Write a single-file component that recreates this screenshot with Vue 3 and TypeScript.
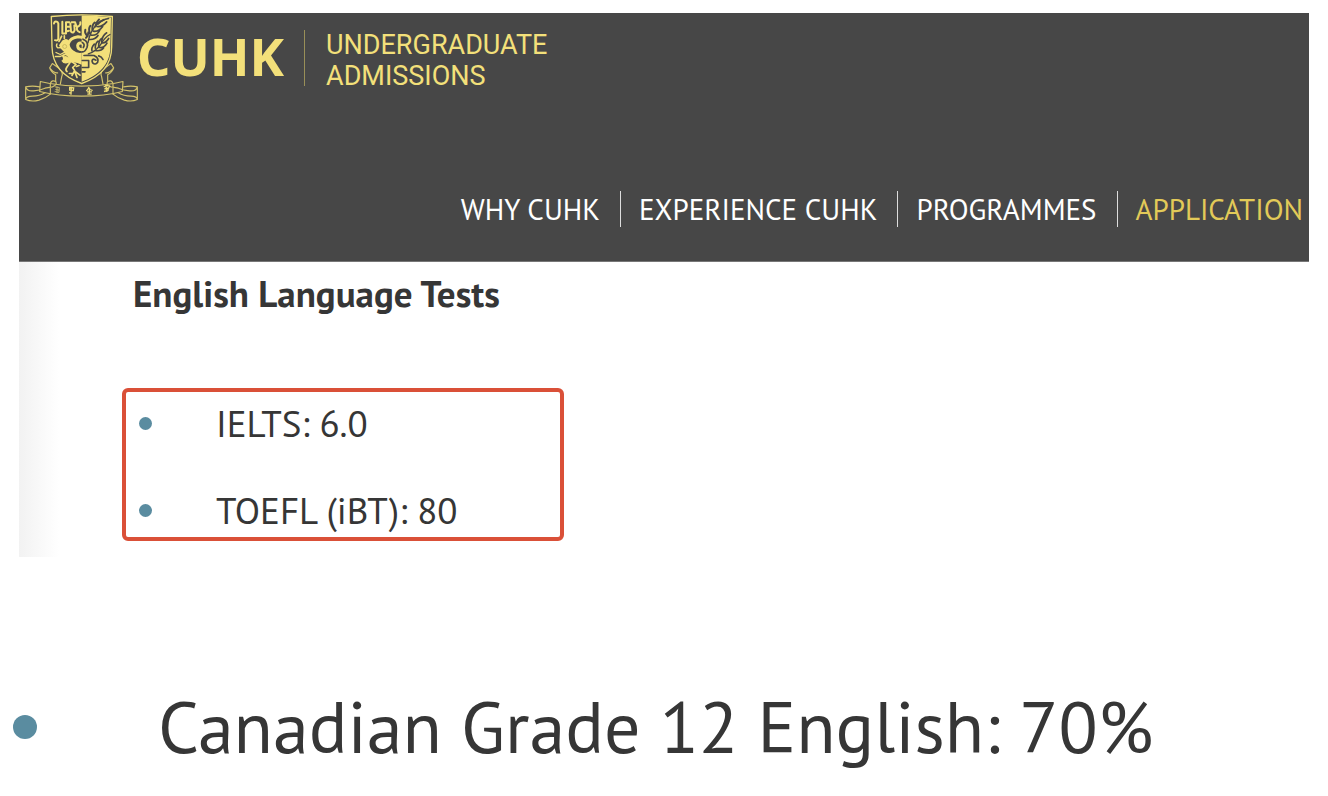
<script setup lang="ts">
interface NavItem {
  label: string
  current?: boolean
}

const navItems: NavItem[] = [
  { label: 'WHY CUHK' },
  { label: 'EXPERIENCE CUHK' },
  { label: 'PROGRAMMES' },
  { label: 'APPLICATION', current: true },
]

const tests: string[] = ['IELTS: 6.0', 'TOEFL (iBT): 80']
</script>

<template>
  <div class="page">
    <header class="header">
      <a class="brand" href="#">
        <svg class="crest" viewBox="30 28 339 267" aria-hidden="true">
          <g fill="none" stroke="#d3c26a" stroke-width="3.5" stroke-linejoin="round" stroke-linecap="round">
            <path d="M112 178 L104 191 Q108 204 122 212 L122 232 M112 178 L134 194 Q146 206 140 218 L136 240 M104 191 Q118 208 128 206" />
            <path d="M288 178 L296 191 Q292 204 278 212 L278 232 M288 178 L266 194 Q254 206 260 218 L264 240 M296 191 Q282 208 272 206" />
            <path d="M76 232 L104 238 Q150 246 200 246 Q250 246 296 238 L324 232 L322 262 Q270 276 200 276 Q130 276 74 262 Z" />
            <path d="M74 248 Q52 244 32 248 L32 286 Q50 294 72 288 Q92 282 106 270 M32 248 Q36 262 56 260 Q76 258 90 252 L112 248 Q128 242 122 232 Q112 226 106 237 L106 270 M32 286 Q34 276 52 276 Q74 276 90 266" />
            <path d="M326 248 Q348 244 367 248 L367 286 Q350 294 328 288 Q308 282 294 270 M367 248 Q364 262 344 260 Q324 258 310 252 L288 248 Q272 242 278 232 Q288 226 294 237 L294 270 M367 286 Q366 276 348 276 Q326 276 310 266" />
          </g>
          <path d="M109 37 Q200 27 292 37 L290 128 C290 186 252 220 200 238 C148 220 112 186 111 128 Z" fill="#474747" stroke="#eedc76" stroke-width="4" />
          <path d="M200 34 Q246 34 288 40 L286 128 C286 182 250 215 200 233 Z" fill="#f3e07a" />
          <g fill="none" stroke="#f3e07a" stroke-width="6" stroke-linecap="round" stroke-linejoin="round">
            <path d="M117 58 Q118 50 127 53 L130 58 L130 102 Q130 111 120 108" />
            <path d="M142 53 L142 88 L153 88 L153 54 L163 54 M153 68 L164 68 M153 82 L162 80" />
            <path d="M166 58 L168 82 Q175 90 179 78 L178 64 M170 54 L180 54 L184 66 Q191 70 196 60 L196 54 M186 70 Q184 80 194 84" />
            <path d="M140 96 L132 112 M148 95 L148 103" stroke-width="5" />
            <path d="M126 119 Q122 126 128 131 L142 130 M123 145 L136 151 L151 143 M121 157 L136 157 L150 150" stroke-width="4" />
            <path d="M165 175 L155 190 Q150 198 156 202 M171 173 L183 181 L173 190 L179 199 M184 187 L192 184 M178 201 L171 214 M180 204 L186 220 M182 203 L195 213 M174 208 L163 208" stroke-width="5" />
          </g>
          <path d="M142 109 Q155 99 162 111 Q163 130 175 139 Q185 148 200 146 L200 182 Q181 171 162 176 Q145 182 139 170 Q148 165 141 156 L151 147 L137 133 L132 123 Z" fill="#f3e07a" />
          <circle cx="149" cy="127" r="6" fill="none" stroke="#b9a955" stroke-width="2" />
          <path d="M148 155 Q154 151 158 159" fill="none" stroke="#80773f" stroke-width="3" />
          <path d="M160 118 Q166 101 189 98 Q217 99 217 120 Q216 138 201 137 Q188 136 188 124 Q190 115 199 117" fill="none" stroke="#f3e07a" stroke-width="9" stroke-linecap="round" />
          <g fill="none" stroke="#474747" stroke-linecap="round" stroke-linejoin="round" stroke-width="5">
            <path d="M204 105 Q222 112 216 130 Q209 145 201 143" />
            <path d="M202 115 Q211 120 205 130" />
            <path d="M219 116 Q224 81 248 59 Q260 47 281 43" stroke-width="4" />
            <path d="M213 101 Q220 95 220 84 M218 96 Q208 88 211 77 M225 88 Q219 74 226 65 M232 77 Q231 61 239 55 M241 67 Q244 53 252 46 M249 59 Q256 51 266 47" stroke-width="6" />
            <path d="M224 106 Q240 107 249 94 M228 93 Q246 95 254 79 M235 81 Q251 84 263 67 M246 67 Q261 69 275 53" stroke-width="5" />
            <path d="M220 149 Q244 142 260 117 Q270 99 285 91" stroke-width="4" />
            <path d="M231 140 Q228 131 238 120 M241 132 Q240 119 249 111 M251 125 Q251 109 260 103 M260 113 Q262 94 275 86 M241 139 Q258 142 266 131 M250 129 Q266 134 276 117 M260 116 Q271 119 281 103" stroke-width="5" />
            <path d="M207 154 Q221 153 237 154 Q253 162 248 174 Q241 184 233 176 Q228 166 237 165 L243 168" />
            <path d="M202 169 L221 169 L221 190 L202 190 M202 203 L210 203 M251 155 Q260 157 264 166" stroke-width="5" />
          </g>
          <g fill="none" stroke="#eedc76" stroke-width="4">
            <path d="M120 248 L133 250 L132 265 L119 262 M121 256 L132 258 M126 247 L126 267" stroke-width="2" />
            <path d="M164 250 L176 251 L175 259 L164 258 Z M169 248 L168 272 M162 266 L170 266" />
            <path d="M220 249 L225 256 L233 259 M221 252 L214 261 M216 263 L231 263 M223 256 L223 272 M217 270 L230 270" />
            <path d="M266 247 L279 244 M268 254 L283 251 M272 242 L276 263 M267 262 L281 258 M284 244 L278 259" />
          </g>
        </svg>
        <span class="wordmark">CUHK</span>
        <span class="office">UNDERGRADUATE<br />ADMISSIONS</span>
      </a>
      <nav class="nav" aria-label="Main">
        <a
          v-for="item in navItems"
          :key="item.label"
          class="nav-link"
          :class="{ current: item.current }"
          href="#"
        >{{ item.label }}</a>
      </nav>
    </header>

    <main>
      <section class="sheet">
        <h1 class="title">English Language Tests</h1>
        <ul class="list boxed">
          <li v-for="test in tests" :key="test">{{ test }}</li>
        </ul>
      </section>
      <ul class="list large">
        <li>Canadian Grade 12 English: 70%</li>
      </ul>
    </main>
  </div>
</template>

<style>
body {
  margin: 0;
  background: #fff;
}
</style>

<style scoped>
.page {
  padding-top: 13px;
  overflow: hidden;
  color: #363636;
  font-family: "PT Sans", "Noto Sans", sans-serif;
}

.header {
  margin: 0 19px;
  background: #474747;
  border-bottom: 1px solid #777;
}

.brand {
  display: flex;
  align-items: flex-start;
  width: max-content;
  padding-left: 6px;
  color: #f3e07a;
  text-decoration: none;
}

.crest {
  width: 113px;
  height: 90px;
}

.wordmark {
  margin: 13px 0 0 -1px;
  font: 700 52px/60px "Noto Sans", sans-serif;
}

.office {
  height: 56px;
  margin: 17px 0 0 20px;
  padding-left: 21px;
  border-left: 1px solid #998f58;
  font: 400 27px/31px Roboto, sans-serif;
}

.nav {
  display: flex;
  justify-content: flex-end;
  padding: 88px 6px 34px 0;
}

.nav-link {
  padding-left: 18px;
  color: #fff;
  font-size: 29px;
  line-height: 36px;
  text-decoration: none;
}

.nav-link + .nav-link {
  margin-left: 20px;
  border-left: 1px solid #ddd;
}

.nav-link.current {
  color: #e2ca58;
}

.sheet {
  margin: 0 19px;
  padding: 6px 0 16px 103px;
  background: linear-gradient(to right, #f2f2f2, #fff 40px);
}

.title {
  margin: 0 0 70px 11px;
  font-size: 37px;
  line-height: 50px;
}

.list {
  margin: 0;
  padding: 0;
  list-style: none;
}

.list li {
  display: flex;
  align-items: center;
}

.list li::before {
  content: "";
  flex: none;
  border-radius: 50%;
  background: #5a8ca0;
}

.boxed {
  display: grid;
  gap: 37px;
  box-sizing: border-box;
  max-width: 442px;
  padding: 6px 13px 2px;
  border: 4px solid #da5038;
  border-radius: 6px;
  font-size: 37px;
  line-height: 50px;
}

.boxed li::before {
  width: 13px;
  height: 13px;
  margin-right: 64px;
}

.large {
  padding: 120px 13px 0;
  font-size: 72px;
  line-height: 100px;
}

.large li::before {
  width: 24px;
  height: 24px;
  margin-right: 121px;
}
</style>
